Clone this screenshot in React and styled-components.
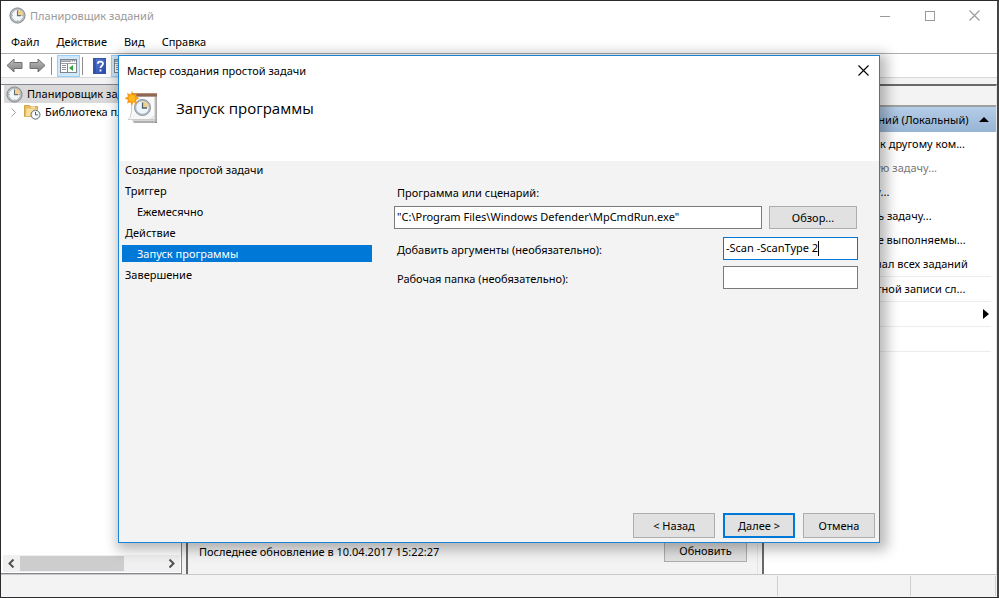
import React from "react";
import styled, { createGlobalStyle } from "styled-components";

const Global = createGlobalStyle`
  *, *::before, *::after { box-sizing: border-box; }
  html, body, #root { height: 100%; margin: 0; }
  body, button, input {
    font-family: "Noto Sans", "Open Sans", sans-serif;
    font-size: 11px;
    line-height: 16px;
    color: #000;
  }
  body { overflow: hidden; background: #f3f3f3; }
  ul, ol, h1, h2, p { margin: 0; padding: 0; list-style: none; font: inherit; }
  svg { display: block; flex: none; }
`;

const Window = styled.div`
  position: relative;
  height: 100vh;
  display: flex;
  flex-direction: column;
  background: #f3f3f3;
  border: 1px solid #2b2a2c;
  border-right: 2px solid #454545;
  white-space: nowrap;
`;
const TitleBar = styled.header`
  display: flex;
  align-items: center;
  height: 29px;
  padding-left: 8px;
  background: #fff;
  color: #999;
`;
const Title = styled.h1`
  flex: 1;
  padding-left: 4px;
`;
const WindowButton = styled.button`
  display: grid;
  place-items: center;
  width: 45px;
  height: 29px;
  padding: 0;
  border: 0;
  background: none;
`;
const MenuBar = styled.nav`
  display: flex;
  align-items: center;
  gap: 17px;
  height: 23px;
  padding-left: 10px;
  background: #fff;
`;
const MenuItem = styled.button`
  padding: 0;
  border: 0;
  background: none;
`;
const ToolBar = styled.div`
  display: flex;
  align-items: center;
  height: 25px;
  padding-left: 2px;
  background: #fff;
  border-top: 1px solid #adadad;
  border-bottom: 1px solid #d8d8d8;
`;
const ToolButton = styled.button`
  display: grid;
  place-items: center;
  width: 23px;
  height: 22px;
  padding: 0;
  border: 1px solid ${(p) => (p.$on ? "#9ccdf5" : "transparent")};
  background: ${(p) => (p.$on ? "#cfe8fb" : "none")};
`;
const ToolSeparator = styled.span`
  width: 1px;
  height: 18px;
  margin: 0 5px 0 2px;
  background: #8c8c8c;
`;
const Workspace = styled.main`
  flex: 1;
  min-height: 0;
  display: grid;
  grid-template-columns: 181px 1fr 235px;
  column-gap: 4px;
  padding-top: 6px;
`;
const TreePane = styled.section`
  display: flex;
  flex-direction: column;
  border: solid #828790;
  border-width: 1px 1px 1px 0;
  background: #fff;
`;
const Tree = styled.ul`
  flex: 1;
  padding-left: 3px;
  overflow: hidden;
`;
const TreeRow = styled.li`
  display: flex;
  align-items: center;
  gap: 4px;
  height: 18px;
  padding-left: ${(p) => (p.$selected ? 2 : 3)}px;
  background: ${(p) => (p.$selected ? "#d9d9d9" : "transparent")};
`;
const TreeToggle = styled.button`
  display: grid;
  flex: none;
  place-items: center;
  width: 13px;
  height: 16px;
  padding: 0;
  border: 0;
  background: none;
`;
const ScrollBar = styled.div`
  display: grid;
  grid-template-columns: 17px 104px 1fr 17px;
  align-items: center;
  height: 17px;
  margin: 0 1px 1px 2px;
  background: #f0f0f0;
`;
const ScrollThumb = styled.span`
  height: 15px;
  background: #cdcdcd;
`;
const ScrollButton = styled.button`
  grid-column: ${(p) => (p.$end ? 4 : 1)};
  display: grid;
  place-items: center;
  padding: 0;
  border: 0;
  background: none;
`;
const SummaryPane = styled.section`
  display: flex;
  align-items: flex-end;
  justify-content: space-between;
  padding: 0 10px 12px 11px;
  border: solid #696969;
  border-width: 2px 1px 0 2px;
  border-right-color: #e3e3e3;
`;
const Updated = styled.p`padding-bottom: 2px;`;
const ActionsPane = styled.aside`
  border-top: 2px solid #696969;
  border-left: 2px solid #696969;
  border-right: 1px solid #e3e3e3;
  background: #fff;
  overflow: hidden;
`;
const ActionsTitle = styled.div`
  height: 21px;
  background: #f3f3f3;
  border-bottom: 2px solid #a0a0a0;
`;
const ActionsHeader = styled.div`
  display: flex;
  align-items: center;
  justify-content: space-between;
  height: 25px;
  padding: 0 7px 0 11px;
  background: linear-gradient(#b4cde8, #98b4d4);
`;
const ActionList = styled.ul``;
const ActionRow = styled.li`
  display: flex;
  align-items: center;
  height: ${(p) => (p.$ruled ? 25 : 24)}px;
  margin-right: 5px;
  border-bottom: ${(p) => (p.$ruled ? "1px solid #ececec" : "0")};
`;
const Action = styled.button`
  display: flex;
  flex: 1;
  align-items: center;
  justify-content: space-between;
  min-height: 16px;
  padding: 0 2px 0 35px;
  border: 0;
  background: none;
  white-space: nowrap;
  &:disabled { color: #777; }
`;
const StatusBar = styled.footer`
  display: grid;
  grid-template-columns: 1fr 133px 85px;
  height: 23px;
  padding: 1px 1px 1px 0;
  border-top: 1px solid #c8c8c8;
`;
const StatusCell = styled.span`
  border-right: 1px solid #d0d0d0;
`;
const PushButton = styled.button`
  min-width: ${(p) => p.$width}px;
  height: ${(p) => (p.$short ? 23 : 25)}px;
  padding: 0;
  border: ${(p) => (p.$primary ? "2px solid #0078d7" : "1px solid #adadad")};
  background: #e1e1e1;
`;
const Dialog = styled.div`
  position: absolute;
  inset: 54px 117px 54px 117px;
  display: flex;
  flex-direction: column;
  border: 1px solid #1883d7;
  background: #f3f3f3;
  box-shadow: 3px 3px 12px 4px rgba(0, 0, 0, 0.28);
`;
const DialogBar = styled.div`
  display: flex;
  align-items: center;
  justify-content: space-between;
  height: 29px;
  padding-left: 8px;
  background: #fff;
`;
const CloseButton = styled(WindowButton)`width: 31px;`;
const DialogHeading = styled.div`
  display: flex;
  align-items: flex-start;
  gap: 18px;
  height: 76px;
  padding: 6px 0 0 6px;
  background: #fff;
`;
const StepTitle = styled.h2`
  padding-top: 6px;
  font-family: "Open Sans", "Noto Sans", sans-serif;
  font-size: 15px;
  line-height: 22px;
`;
const DialogBody = styled.div`
  flex: 1;
  display: grid;
  grid-template-columns: 250px 1fr;
  column-gap: 22px;
  padding: 0 21px 0 3px;
`;
const Steps = styled.ol`
  display: grid;
  align-content: start;
  row-gap: 4px;
`;
const Step = styled.li`
  padding-left: ${(p) => (p.$nested ? 15 : 3)}px;
  line-height: 17px;
  background: ${(p) => (p.$current ? "#0078d7" : "transparent")};
  color: ${(p) => (p.$current ? "#fff" : "#000")};
`;
const Form = styled.form`
  display: flex;
  flex-direction: column;
  padding-top: 22px;
`;
const FieldLabel = styled.label`padding: 2px 0 0 3px;`;
const ProgramRow = styled.div`
  display: flex;
  align-items: center;
  gap: 7px;
  margin: 5px 1px 5px 0;
`;
const FieldRow = styled.div`
  display: flex;
  align-items: center;
  justify-content: space-between;
  height: 29px;
`;
const TextBox = styled.input`
  flex: 1;
  min-width: 0;
  height: 23px;
  padding: 0 2px 2px;
  border: 1px solid #7a7a7a;
  background: #fff;
  outline: none;
`;
const ShortTextBox = styled(TextBox)`flex: none; width: 135px;`;
const FocusedBox = styled.div`
  display: flex;
  align-items: center;
  width: 135px;
  height: 23px;
  padding: 0 2px;
  border: 1px solid #0078d7;
  background: #fff;
`;
const InlineInput = styled.input`
  field-sizing: content;
  max-width: 128px;
  padding: 0 0 2px;
  border: 0;
  outline: none;
  background: none;
`;
const Caret = styled.span`
  width: 1px;
  height: 15px;
  background: #000;
`;
const DialogButtons = styled.div`
  display: flex;
  justify-content: flex-end;
  gap: 8px;
  padding: 0 4px;
  margin-bottom: 4px;
`;

function Clock({ size = 17 }) {
  return (
    <svg width={size} height={size} viewBox="0 0 17 17">
      <circle cx="8.5" cy="8.5" r="7.6" fill="#b9bbbd" stroke="#85888b" />
      <circle cx="8.5" cy="8.5" r="5.9" fill="#f3f8fb" stroke="#a3acb3" strokeWidth=".7" />
      <path d="M8.5 8.5V2.8A5.7 5.7 0 0 1 14.2 8.5Z" fill="#f4d089" />
      <path d="M8.5 3.8v4.8h3.7" fill="none" stroke="#65727d" strokeWidth="1.1" />
      <path d="M8.5 2.8v1M8.5 13.2v1M2.8 8.5h1M13.2 8.5h1M4.6 4.6l.6.6M4.6 12.4l.6-.6M12.4 12.4l-.6-.6" stroke="#82909b" strokeWidth=".7" />
    </svg>
  );
}

function Arrow({ right }) {
  return (
    <svg width="17" height="15" viewBox="0 0 17 15">
      <defs>
        <linearGradient id={right ? "ar" : "al"} x2="0" y2="1">
          <stop stopColor="#bdbdbd" />
          <stop offset="1" stopColor="#808080" />
        </linearGradient>
      </defs>
      <path
        d={right ? "M16 7.5 9 1v3.5H1v6h8V14Z" : "M1 7.5 8 1v3.5h8v6H8V14Z"}
        fill={right ? "url(#ar)" : "url(#al)"}
        stroke="#707070"
        strokeLinejoin="round"
      />
    </svg>
  );
}

function PanelIcon() {
  return (
    <svg width="17" height="14" viewBox="0 0 17 14">
      <rect x=".5" y=".5" width="16" height="13" fill="#fff" stroke="#808387" />
      <path d="M1 1.5h15" stroke="#b9bcc0" />
      <path d="M1 4.5h15" stroke="#9a9da1" />
      <path d="M1 2.5h10" stroke="#9a9da1" />
      <path d="M12 2h1M14 2h1" stroke="#6d7074" />
      <path d="M7.5 5v8" stroke="#808387" />
      <path d="M2 6.5h4M2 8.5h4M2 10.5h4" stroke="#8f9296" />
      <path d="M13 6v6L9 9Z" fill="#35a63b" />
    </svg>
  );
}

function HelpIcon() {
  return (
    <svg width="13" height="16" viewBox="0 0 13 16">
      <defs>
        <linearGradient id="help" x2="1" y2="1">
          <stop stopColor="#5a80d5" />
          <stop offset="1" stopColor="#2846ab" />
        </linearGradient>
      </defs>
      <rect x=".5" y=".5" width="12" height="15" fill="url(#help)" stroke="#3a52a4" />
      <path d="M2 1v14" stroke="#203c94" />
      <path d="M4.8 5.8c0-3 5.2-3 5.2 0 0 2-2.5 1.9-2.5 4.2M7.5 11.4v2" fill="none" stroke="#fff" strokeWidth="1.8" />
    </svg>
  );
}

function FolderIcon() {
  return (
    <svg width="17" height="16" viewBox="0 0 17 16">
      <path d="M.5 12.5v-11h5l1 1h7v10Z" fill="#e9bd63" stroke="#d3a347" />
      <path d="M1.5 12.5 2 4h11l.5 8.5Z" fill="#f9df99" stroke="#dcb35c" strokeWidth=".7" />
      <path d="M7 3h4" stroke="#fff" />
      <circle cx="11.5" cy="10.7" r="4.5" fill="#dce3e8" stroke="#687682" />
      <circle cx="11.5" cy="10.7" r="3.1" fill="#fff" />
      <path d="M11.5 8v2.9h2.3" fill="none" stroke="#385b78" />
    </svg>
  );
}

function TaskIcon() {
  return (
    <svg width="33" height="34" viewBox="0 0 33 34">
      <path d="M7 28h25v4H9Z" fill="#8b8b8b" />
      <path d="M29 5h3v26h-3Z" fill="#a9a9a9" />
      <path d="M6.5 5.500h23.500v23h-23.500Z" fill="#fafafa" stroke="#c9c9c9" />
      <path d="M8 29.500h22M8 31h22" stroke="#d4d4d4" />
      <path d="M7 2.500h25v3H7Z" fill="#906753" />
      <path d="M7 2.500h25" stroke="#b58b75" />
      <path d="M6 22q0 5-3 6.500h22q4-1 5-5" fill="#f7f7f7" stroke="#c7c7c7" strokeWidth=".8" />
      <circle cx="17.500" cy="16.500" r="8" fill="#b5bdc3" stroke="#8b949b" />
      <circle cx="17.500" cy="16.500" r="6.200" fill="#edf6fc" />
      <path d="M17.500 16.500v-6a6 6 0 0 1 6 6Z" fill="#f2d08b" />
      <path d="M17.500 11.500V17H22" fill="none" stroke="#51616f" strokeWidth="1.300" />
      <path d="m7 0 1.500 3.500L12 2l-1 3.600 3.500 1.700L11 9l1 3.600-3.600-1.300L7 15l-1.700-3.700L2 12.600 3 9-.5 7.300 3 5.600 2 2l3.500 1.500Z" fill="#f99a13" />
      <circle cx="7" cy="7.300" r="3.200" fill="#ffb91d" />
    </svg>
  );
}

function Cross({ color }) {
  return (
    <svg width="11" height="11" viewBox="0 0 11 11">
      <path d="m.5.5 10 10M10.5.5l-10 10" stroke={color} strokeWidth="1.1" />
    </svg>
  );
}

function Chevron({ right, color = "#505050", thick = 2 }) {
  return (
    <svg width="7" height="9" viewBox="0 0 7 9">
      <path d={right ? "m1.5.5 4 4-4 4" : "m5.5.5-4 4 4 4"} fill="none" stroke={color} strokeWidth={thick} />
    </svg>
  );
}

const actions = [
  { text: "Подключиться к другому ком..." },
  { text: "Создать простую задачу...", disabled: true },
  { text: "Создать задачу..." },
  { text: "Импортировать задачу..." },
  { text: "Отображать все выполняемы..." },
  { text: "Включить журнал всех заданий", ruled: true },
  { text: "Настройка учетной записи сл...", ruled: true },
  { text: "Вид", ruled: true, submenu: true },
  { text: "Справка", ruled: true },
];

const steps = [
  { text: "Создание простой задачи" },
  { text: "Триггер" },
  { text: "Ежемесячно", nested: true },
  { text: "Действие" },
  { text: "Запуск программы", nested: true, current: true },
  { text: "Завершение" },
];

function Wizard() {
  return (
    <Dialog role="dialog" aria-label="Мастер создания простой задачи">
      <DialogBar>
        <span>Мастер создания простой задачи</span>
        <CloseButton aria-label="Закрыть"><Cross color="#000" /></CloseButton>
      </DialogBar>
      <DialogHeading>
        <TaskIcon />
        <StepTitle>Запуск программы</StepTitle>
      </DialogHeading>
      <DialogBody>
        <Steps>
          {steps.map((s) => (
            <Step key={s.text} $nested={s.nested} $current={s.current}>{s.text}</Step>
          ))}
        </Steps>
        <Form onSubmit={(e) => e.preventDefault()}>
          <FieldLabel htmlFor="program">Программа или сценарий:</FieldLabel>
          <ProgramRow>
            <TextBox id="program" defaultValue={'"C:\\Program Files\\Windows Defender\\MpCmdRun.exe"'} />
            <PushButton type="button" $width={88} $short>Обзор...</PushButton>
          </ProgramRow>
          <FieldRow>
            <FieldLabel htmlFor="arguments">Добавить аргументы (необязательно):</FieldLabel>
            <FocusedBox>
              <InlineInput id="arguments" defaultValue="-Scan -ScanType 2" />
              <Caret />
            </FocusedBox>
          </FieldRow>
          <FieldRow>
            <FieldLabel htmlFor="folder">Рабочая папка (необязательно):</FieldLabel>
            <ShortTextBox id="folder" />
          </FieldRow>
        </Form>
      </DialogBody>
      <DialogButtons>
        <PushButton $width={82}>&lt; Назад</PushButton>
        <PushButton $width={72} $primary>Далее &gt;</PushButton>
        <PushButton $width={72}>Отмена</PushButton>
      </DialogButtons>
    </Dialog>
  );
}

export default function App() {
  return (
    <>
      <Global />
      <Window>
        <TitleBar>
          <Clock />
          <Title>Планировщик заданий</Title>
          <WindowButton aria-label="Свернуть">
            <svg width="10" height="10"><path d="M0 5.5h10" stroke="#999" /></svg>
          </WindowButton>
          <WindowButton aria-label="Развернуть">
            <svg width="10" height="10"><rect x=".5" y=".5" width="9" height="9" fill="none" stroke="#999" /></svg>
          </WindowButton>
          <WindowButton aria-label="Закрыть"><Cross color="#999" /></WindowButton>
        </TitleBar>
        <MenuBar>
          {["Файл", "Действие", "Вид", "Справка"].map((m) => <MenuItem key={m}>{m}</MenuItem>)}
        </MenuBar>
        <ToolBar>
          <ToolButton aria-label="Назад"><Arrow /></ToolButton>
          <ToolButton aria-label="Вперед"><Arrow right /></ToolButton>
          <ToolSeparator />
          <ToolButton $on aria-label="Дерево консоли"><PanelIcon /></ToolButton>
          <ToolSeparator />
          <ToolButton aria-label="Справка"><HelpIcon /></ToolButton>
          <ToolButton $on aria-label="Панель действий"><PanelIcon /></ToolButton>
        </ToolBar>
        <Workspace>
          <TreePane>
            <Tree>
              <TreeRow $selected><Clock />Планировщик заданий (Локальный)</TreeRow>
              <TreeRow>
                <TreeToggle aria-label="Раскрыть"><Chevron right color="#a0a0a0" thick={1} /></TreeToggle>
                <FolderIcon />
                Библиотека планировщика
              </TreeRow>
            </Tree>
            <ScrollBar>
              <ScrollButton aria-label="Влево"><Chevron /></ScrollButton>
              <ScrollThumb />
              <ScrollButton $end aria-label="Вправо"><Chevron right /></ScrollButton>
            </ScrollBar>
          </TreePane>
          <SummaryPane>
            <Updated>Последнее обновление в 10.04.2017 15:22:27</Updated>
            <PushButton $width={83} $short>Обновить</PushButton>
          </SummaryPane>
          <ActionsPane>
            <ActionsTitle />
            <ActionsHeader>
              <span>Планировщик заданий (Локальный)</span>
              <svg width="10" height="5"><path d="M0 5 5 0l5 5Z" /></svg>
            </ActionsHeader>
            <ActionList>
              {actions.map((a) => (
                <ActionRow key={a.text} $ruled={a.ruled}>
                  <Action disabled={a.disabled}>
                    {a.text}
                    {a.submenu && <svg width="6" height="10"><path d="M0 0 6 5 0 10Z" /></svg>}
                  </Action>
                </ActionRow>
              ))}
            </ActionList>
          </ActionsPane>
        </Workspace>
        <StatusBar><StatusCell /><StatusCell /><StatusCell /></StatusBar>
        <Wizard />
      </Window>
    </>
  );
}
